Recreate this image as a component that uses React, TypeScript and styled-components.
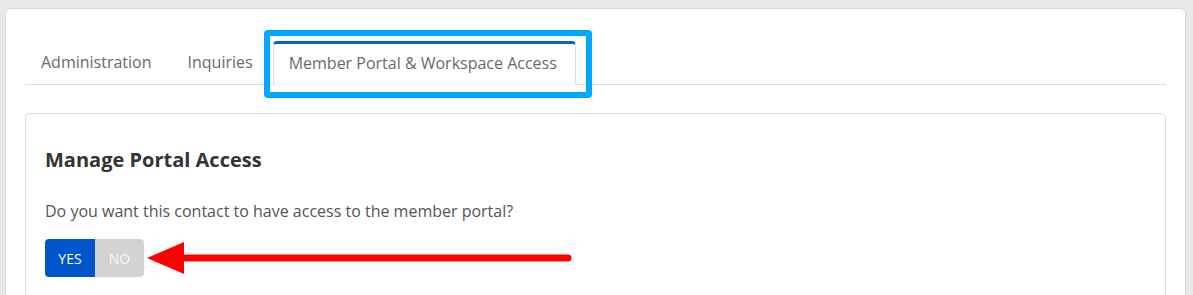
import React, { useState } from 'react';
import styled, { createGlobalStyle } from 'styled-components';

const GlobalStyle = createGlobalStyle`
  html, body {
    margin: 0;
    padding: 0;
    background: #e8e8e8;
    font-family: 'Open Sans', 'Noto Sans', Arial, sans-serif;
    overflow: hidden;
  }
`;

const Page = styled.div`
  padding: 8px 7px 0 5px;
`;

const Card = styled.div`
  background: #fff;
  border: 1px solid #d9d9d9;
  border-radius: 6px;
  padding: 32px 19px 40px 19px;
  min-height: 320px;
`;

const TabBar = styled.ul`
  display: flex;
  gap: 4px;
  list-style: none;
  margin: 0;
  padding: 0;
  border-bottom: 1px solid #dddddd;
`;

const Tab = styled.li<{ $active?: boolean }>`
  position: relative;
  display: flex;
  align-items: center;
  box-sizing: border-box;
  height: 44px;
  padding: 0 15px 3px 15px;
  margin-bottom: -1px;
  font-size: 16px;
  color: #6a6a6a;
  cursor: pointer;
  border: 1px solid transparent;
  border-radius: 4px 4px 0 0;
  ${({ $active }) =>
    $active &&
    `
    background: #fff;
    border-color: #dddddd;
    border-bottom-color: #fff;
    border-top: 3px solid #0066cc;
    padding: 0 18px 2px 15px;
  `}
`;

const Highlight = styled.span`
  position: absolute;
  left: -10px;
  right: -17px;
  top: -14px;
  bottom: -14px;
  border: 6px solid #00a6ff;
  border-radius: 4px;
  pointer-events: none;
`;

const Panel = styled.div`
  margin-top: 28px;
  border: 1px solid #dddddd;
  border-radius: 5px;
  padding: 32px 19px 40px 19px;
  min-height: 200px;
`;

const Heading = styled.h3`
  margin: 0;
  font-size: 20px;
  line-height: 27px;
  font-weight: 700;
  color: #333;
`;

const Question = styled.p`
  margin: 27px 0 17px 0;
  font-size: 16px;
  line-height: 22px;
  color: #555;
`;

const ToggleRow = styled.div`
  display: flex;
  align-items: center;
  gap: 3px;
`;

const Toggle = styled.div`
  display: flex;
  border-radius: 4px;
  overflow: hidden;
`;

const ToggleButton = styled.button<{ $on: boolean }>`
  width: ${({ $on }) => ($on ? '50px' : '49px')};
  height: 38px;
  border: none;
  padding: 0;
  font-family: inherit;
  font-size: 14px;
  color: ${({ $on }) => ($on ? '#ffffff' : '#f7f7f7')};
  background: ${({ $on }) => ($on ? '#0055cc' : '#d3d3d3')};
  cursor: pointer;
`;

const Arrow = () => (
  <svg width="426" height="34" viewBox="0 0 426 34">
    <polygon points="0,17 37,1 37,33" fill="#ff0000" />
    <line x1="34" y1="17" x2="421" y2="17" stroke="#ff0000" strokeWidth="7" strokeLinecap="round" />
  </svg>
);

const tabs = ['Administration', 'Inquiries', 'Member Portal & Workspace Access'];

export default function App() {
  const [active, setActive] = useState(2);
  const [access, setAccess] = useState(true);

  return (
    <Page>
      <GlobalStyle />
      <Card>
        <TabBar>
          {tabs.map((t, i) => (
            <Tab key={t} $active={i === active} onClick={() => setActive(i)}>
              {t}
              {i === 2 && <Highlight />}
            </Tab>
          ))}
        </TabBar>
        <Panel>
          <Heading>Manage Portal Access</Heading>
          <Question>Do you want this contact to have access to the member portal?</Question>
          <ToggleRow>
            <Toggle>
              <ToggleButton $on={access} onClick={() => setAccess(true)}>YES</ToggleButton>
              <ToggleButton $on={!access} onClick={() => setAccess(false)}>NO</ToggleButton>
            </Toggle>
            <Arrow />
          </ToggleRow>
        </Panel>
      </Card>
    </Page>
  );
}
